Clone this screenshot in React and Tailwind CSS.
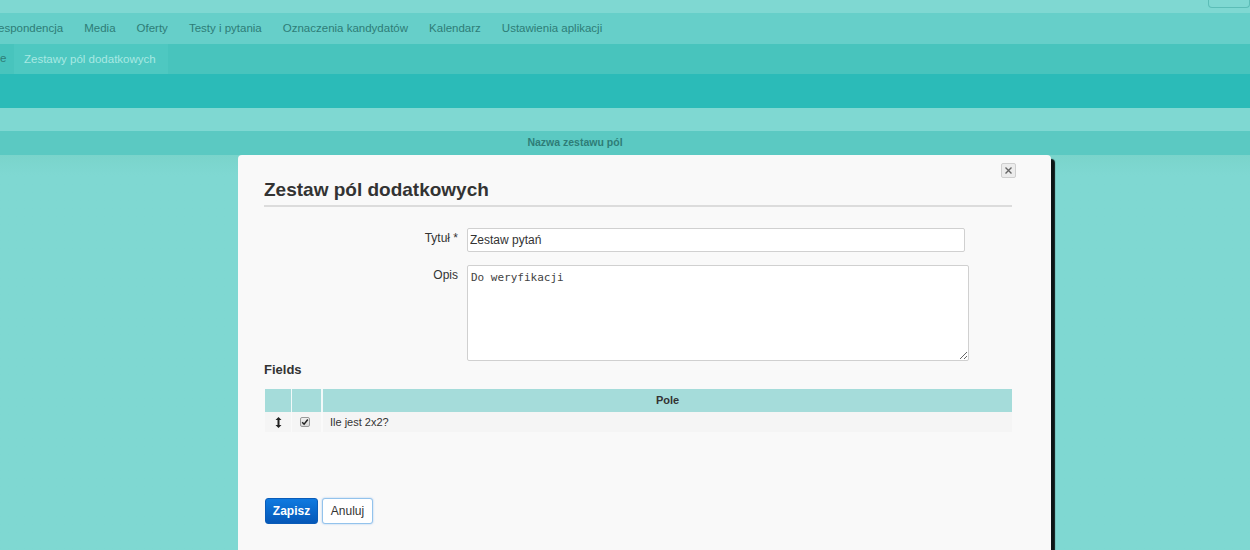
import React from "react";

const navItems = [
  "espondencja",
  "Media",
  "Oferty",
  "Testy i pytania",
  "Oznaczenia kandydatów",
  "Kalendarz",
  "Ustawienia aplikacji",
];

const App = () => {
  return (
    <div
      className="w-[1250px] h-[550px] overflow-hidden flex flex-col bg-[#7fd8d2]"
      style={{ fontFamily: "'Liberation Sans', Arial, sans-serif" }}
    >
      {/* top strip */}
      <div className="h-[13px] bg-[#7fd8d2] flex justify-end shrink-0">
        <div className="w-[42px] h-[8px] border border-t-0 border-[#5cbdb7] rounded-b-[4px]"></div>
      </div>

      {/* main nav */}
      <div className="h-[31px] bg-[#66cfc9] flex items-center shrink-0 text-[11.5px] text-[#2e7d77]">
        <div className="flex gap-[21px] -ml-[2px]">
          {navItems.map((item) => (
            <span key={item}>{item}</span>
          ))}
        </div>
      </div>

      {/* sub nav */}
      <div className="h-[30px] bg-[#48c4bd] flex shrink-0 text-[11.5px]">
        <div className="w-[14px] flex items-center text-[#2e7d77]">e</div>
        <div className="w-[154px] pl-[10px] pt-[1px] flex items-center bg-[#4ec8c1] text-[#a8e8e3]">
          Zestawy pól dodatkowych
        </div>
      </div>

      <div className="h-[34px] bg-[#2bbbb8] shrink-0"></div>
      <div className="h-[23px] bg-[#7fd8d2] shrink-0"></div>
      <div className="h-[24px] bg-[#5bc9c2] shrink-0 flex items-center justify-center pr-[100px] text-[10.5px] font-bold text-[#2e7d77]">
        Nazwa zestawu pól
      </div>

      {/* modal area */}
      <div className="flex-1 flex pl-[238px] bg-gradient-to-b from-[#7ad4cb] to-[#7fd8d2] to-[20px]">
        <div className="w-[813px] bg-[#f9f9f9] rounded-t-[4px] shadow-[4px_4px_1px_rgba(0,0,0,0.9)] px-[26px] pt-[8px] flex flex-col">
          <div className="flex justify-end pr-[9px]">
            <div className="w-[15px] h-[15px] border border-[#cfcfcf] bg-[#ececec] rounded-[2px] flex items-center justify-center">
              <svg width="9" height="9" viewBox="0 0 9 9">
                <path d="M1.5 1.5L7.5 7.5M7.5 1.5L1.5 7.5" stroke="#666" strokeWidth="1.4" />
              </svg>
            </div>
          </div>
          <h2 className="text-[19px] font-bold text-[#333] leading-[24px]">
            Zestaw pól dodatkowych
          </h2>
          <div className="h-[2px] bg-[#dcdcdc] w-[748px] mt-[3px]"></div>

          <div className="flex mt-[21px]">
            <label className="w-[194px] text-right text-[12px] text-[#333] pt-[1px]">
              Tytuł *
            </label>
            <input
              type="text"
              defaultValue="Zestaw pytań"
              className="ml-[9px] w-[498px] h-[24px] bg-white border border-[#d0d0d0] rounded-[2px] px-[2px] text-[12px] text-[#333] outline-none"
              style={{ fontFamily: "'Liberation Sans', Arial, sans-serif" }}
            />
          </div>
          <div className="flex mt-[13px]">
            <label className="w-[194px] text-right text-[12px] text-[#333] pt-[1px]">
              Opis
            </label>
            <textarea
              defaultValue="Do weryfikacji"
              className="ml-[9px] w-[502px] h-[96px] bg-white border border-[#d0d0d0] rounded-[2px] px-[3px] py-[4px] text-[11px] text-[#444] outline-none resize"
              style={{ fontFamily: "'DejaVu Sans Mono', 'Liberation Mono', monospace" }}
            />
          </div>

          <div className="text-[13px] font-bold text-[#333] mt-[1px] leading-[16px]">Fields</div>

          <div className="mt-[11px] w-[747px] ml-[1px]">
            <div className="flex h-[23px] bg-[#a5dcda] text-[11px] font-bold text-[#333]">
              <div className="w-[27px] border-r border-[#f1f9f9]"></div>
              <div className="w-[31px] border-r-2 border-[#f1f9f9]"></div>
              <div className="flex-1 flex items-center justify-center">Pole</div>
            </div>
            <div className="flex h-[20px] bg-[#f5f5f5] text-[11px] text-[#333]">
              <div className="w-[27px] border-r border-[#fafafa] flex items-center justify-center">
                <svg width="7" height="11" viewBox="0 0 7 11">
                  <path d="M3.5 0L6.5 3H4.5V8H6.5L3.5 11L0.5 8H2.5V3H0.5Z" fill="#222" />
                </svg>
              </div>
              <div className="w-[31px] border-r-2 border-[#fafafa] flex items-center justify-center pr-[4px]">
                <div className="w-[10px] h-[10px] border border-[#999] rounded-[2px] bg-gradient-to-b from-[#f0f0f0] to-[#d8d8d8] flex items-center justify-center">
                  <svg width="8" height="8" viewBox="0 0 8 8">
                    <path d="M1.2 4.2L3.1 6.2L6.8 1.5" stroke="#222" strokeWidth="1.5" fill="none" />
                  </svg>
                </div>
              </div>
              <div className="flex-1 flex items-center pl-[7px]">Ile jest 2x2?</div>
            </div>
          </div>

          <div className="flex gap-[4px] mt-[66px] ml-[1px]">
            <button className="w-[53px] h-[26px] rounded-[3px] bg-gradient-to-b from-[#0f7ae0] to-[#0658b8] text-white text-[12px] font-bold border border-[#0a5cb8]">
              Zapisz
            </button>
            <button className="w-[51px] h-[26px] rounded-[3px] bg-white text-[#333] text-[12px] border border-[#93c3ec] shadow-[0_0_2px_rgba(100,160,230,0.6)]">
              Anuluj
            </button>
          </div>
        </div>
      </div>
    </div>
  );
};

export default App;
